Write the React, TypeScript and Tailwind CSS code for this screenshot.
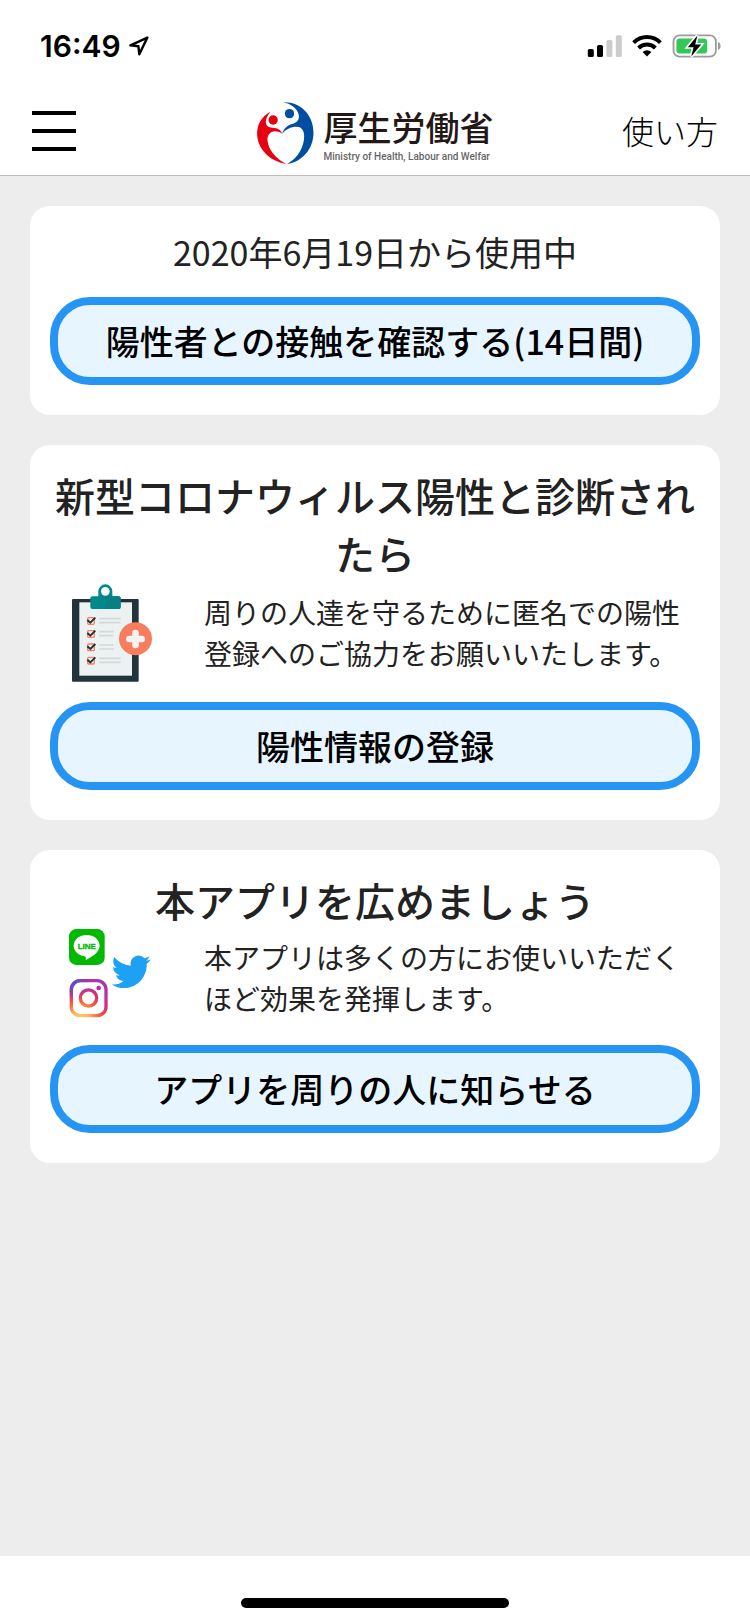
import type { ReactNode } from "react"

const jp = "font-['Noto_Sans_CJK_JP',sans-serif]"

function StatusBar() {
  return (
    <div className="flex h-[88px] items-center justify-between pr-[29px] pl-10">
      <div className="flex items-center gap-2 pt-1">
        <span className="font-['Inter',sans-serif] text-[30px] leading-[36px] font-semibold text-black">16:49</span>
        <svg width="20" height="20" viewBox="0 0 20 20" fill="none" stroke="#000" strokeWidth="2.4" strokeLinejoin="round">
          <path d="M18.4 1.6 1.4 9.4l8 .9.9 8z" />
        </svg>
      </div>
      <div className="flex items-center gap-[10px] pt-1">
        <svg width="35" height="24" viewBox="0 0 35 24">
          <rect x="0.8" y="15" width="6" height="8" rx="1.6" fill="#000" />
          <rect x="10" y="11" width="6" height="12" rx="1.6" fill="#000" />
          <rect x="19.4" y="6" width="6" height="17" rx="1.6" fill="#ccc" />
          <rect x="28.8" y="1.2" width="6" height="21.8" rx="1.6" fill="#ccc" />
        </svg>
        <svg width="30" height="24" viewBox="0 0 30 24" fill="none" stroke="#000" strokeWidth="4">
          <path d="M1.6 8.6a19 19 0 0 1 26.8 0" />
          <path d="M6.6 14a12 12 0 0 1 16.8 0" />
          <path d="M15 22.4 10.6 18a6.2 6.2 0 0 1 8.8 0z" fill="#000" stroke="none" />
        </svg>
        <svg width="49" height="24" viewBox="0 0 49 24">
          <rect x="1.5" y="1.3" width="42.4" height="21.4" rx="6" fill="none" stroke="#9b9b9b" strokeWidth="1.8" />
          <path d="M46 8v8c1.6-.6 2.6-2.2 2.6-4s-1-3.4-2.6-4z" fill="#9b9b9b" />
          <rect x="4.4" y="4.4" width="30.8" height="15.2" rx="3.4" fill="#34c759" />
          <path d="M25.4 1.6 15.8 13.2h5.8L19.2 22.4 29.2 10.6h-6z" fill="#000" stroke="#fff" strokeWidth="3.2" paintOrder="stroke" />
        </svg>
      </div>
    </div>
  )
}

function MinistryLogo() {
  return (
    <div className="flex items-end gap-[9px]">
      <svg width="58" height="64" viewBox="32 33 174 192">
        <circle cx="82" cy="90" r="14" fill="#e60012" />
        <path
          d="M74 65C46 79 32 106 34 136c2 38 34 78 88 86-34-16-56-46-57-72-1-15 9-25 22-26 10 0 17 3 22 7-3-11-13-17-29-18-13-1-20-6-20-18 0-10 5-19 14-30z"
          fill="#e60012"
        />
        <circle cx="131" cy="71" r="14" fill="#004ea2" />
        <path
          d="M112 37c52-2 91 38 91 91 0 48-33 87-79 94 32-18 51-50 51-84 0-18-9-28-23-28-17 0-33 8-43 21 4-15 16-25 30-29 18-6 24-16 18-33-6-16-22-27-45-32z"
          fill="#004ea2"
        />
      </svg>
      <div>
        <p className={`${jp} text-[34px] leading-[44px] font-medium whitespace-nowrap text-[#231815]`}>厚生労働省</p>
        <p className="font-['Roboto',sans-serif] text-[10px] leading-[16px] font-medium whitespace-nowrap text-[#666]">
          Ministry of Health, Labour and Welfar
        </p>
      </div>
    </div>
  )
}

function Header() {
  return (
    <header className="relative flex h-[88px] items-center justify-between border-b border-[#bcbcbc] px-8 pb-0.5">
      <button type="button" aria-label="メニュー" className="flex w-11 flex-col gap-[14px]">
        <span className="h-1 w-full bg-black" />
        <span className="h-1 w-full bg-black" />
        <span className="h-1 w-full bg-black" />
      </button>
      <div className="absolute bottom-[10px] left-1/2 -translate-x-1/2">
        <MinistryLogo />
      </div>
      <a href="#usage" className={`${jp} pb-0.5 text-[32px] leading-[46px] font-light text-black`}>
        使い方
      </a>
    </header>
  )
}

const checkRows = [
  { y: 149, end: 212 },
  { y: 188, end: 191 },
  { y: 228, end: 191 },
  { y: 268, end: 212 },
]

function ClipboardIcon() {
  return (
    <svg width="80" height="100" viewBox="66 33 240 300">
      <rect x="66" y="84" width="200" height="248" rx="3" fill="#22333b" />
      <rect x="88" y="94" width="158" height="220" fill="#ecf2f2" />
      <path d="M145 76V61a21 21 0 0 1 42 0v15h19a6 6 0 0 1 6 6v26a6 6 0 0 1-6 6h-79a6 6 0 0 1-6-6V82a6 6 0 0 1 6-6z" fill="#00888a" />
      <path d="M166 76h40a6 6 0 0 1 6 6v26a6 6 0 0 1-6 6h-40z" fill="#087f80" />
      <circle cx="166" cy="61" r="13" fill="#fff" />
      {checkRows.map(({ y, end }) => (
        <g key={y} fill="none">
          <rect x="113" y={y - 9} width="20" height="20" rx="3" stroke="#f9805f" strokeWidth="4" />
          <path d={`M112 ${y - 2}l9 8 15-15`} stroke="#22333b" strokeWidth="6" />
          <path d={`M147 ${y - 6}H${end}M147 ${y + 6}H${end}`} stroke="#d3dadb" strokeWidth="5" />
        </g>
      ))}
      <circle cx="256.5" cy="203" r="49.5" fill="#f87c5e" />
      <path d="M256.5 186v36M238 204h37" stroke="#f3f3f1" strokeWidth="20" strokeLinecap="round" />
    </svg>
  )
}

function SocialIcons() {
  return (
    <svg width="86" height="96" viewBox="57 39 258 288">
      <defs>
        <radialGradient id="insta" gradientUnits="userSpaceOnUse" cx="92" cy="312" r="132">
          <stop offset="0" stopColor="#ffd070" />
          <stop offset="0.2" stopColor="#fdb65c" />
          <stop offset="0.45" stopColor="#f5583f" />
          <stop offset="0.65" stopColor="#d82c7c" />
          <stop offset="1" stopColor="#a535b5" />
        </radialGradient>
        <radialGradient id="instaBlue" gradientUnits="userSpaceOnUse" cx="62" cy="192" r="64">
          <stop offset="0" stopColor="#4a56d2" />
          <stop offset="0.4" stopColor="#5a50ce" stopOpacity="0.8" />
          <stop offset="1" stopColor="#8a3ac8" stopOpacity="0" />
        </radialGradient>
      </defs>
      <rect x="57" y="39" width="107" height="108" rx="22" fill="#00b900" />
      <path d="M110 57c-22 0-39 14-39 32 0 16 14 29 33 32 4 1 4 4 3 11 14-7 42-22 42-43 0-18-17-32-39-32z" fill="#fff" />
      <text x="110.5" y="98" textAnchor="middle" fill="#00b900" stroke="#00b900" strokeWidth="1" className="font-['Liberation_Sans',sans-serif] text-[24px] font-bold">
        LINE
      </text>
      <path
        transform="translate(185 107.5) scale(4.88 5)"
        d="M23.953 4.57a10 10 0 0 1-2.825.775 4.958 4.958 0 0 0 2.163-2.723c-.951.555-2.005.959-3.127 1.184a4.92 4.92 0 0 0-8.384 4.482C7.69 8.095 4.067 6.13 1.64 3.162a4.822 4.822 0 0 0-.666 2.475c0 1.71.87 3.213 2.188 4.096a4.904 4.904 0 0 1-2.228-.616v.06a4.923 4.923 0 0 0 3.946 4.827 4.996 4.996 0 0 1-2.212.085 4.936 4.936 0 0 0 4.604 3.417 9.867 9.867 0 0 1-6.102 2.105c-.39 0-.779-.023-1.17-.067a13.995 13.995 0 0 0 7.557 2.209c9.053 0 13.998-7.496 13.998-13.985 0-.21 0-.42-.015-.63A9.935 9.935 0 0 0 24 4.59z"
        fill="#1da1f2"
      />
      {["url(#insta)", "url(#instaBlue)"].map((paint) => (
        <g key={paint} fill="none" stroke={paint} strokeWidth="10">
          <rect x="64" y="194" width="104" height="105" rx="27" />
          <circle cx="115.5" cy="246" r="24.5" />
        </g>
      ))}
      <circle cx="146" cy="216" r="7" fill="#b9309a" />
    </svg>
  )
}

function Card({ children }: { children: ReactNode }) {
  return <section className="flex flex-col rounded-[20px] bg-white px-5 pt-[21px] pb-[30px]">{children}</section>
}

function CardTitle({ children }: { children: ReactNode }) {
  return <h2 className="text-center text-[40px] leading-[58px] font-medium">{children}</h2>
}

function CardBody({ icon, children }: { icon: ReactNode; children: ReactNode }) {
  return (
    <div className="flex gap-[30px]">
      <div className="flex w-[124px] shrink-0 items-start justify-center">{icon}</div>
      <p className="self-center pt-0.5 text-[28px] leading-[41px]">{children}</p>
    </div>
  )
}

function ActionButton({ children }: { children: ReactNode }) {
  return (
    <button
      type="button"
      className="mt-5 h-[88px] w-full rounded-[40px] border-8 border-[#2594f3] bg-[#e6f5ff] text-[34px] leading-[50px] font-medium text-black"
    >
      {children}
    </button>
  )
}

export default function App() {
  return (
    <div className="flex min-h-screen flex-col bg-white">
      <StatusBar />
      <Header />
      <main className={`${jp} flex flex-1 flex-col gap-[30px] bg-[#ededed] p-[30px] text-[#222]`} lang="ja">
        <Card>
          <p className="text-center text-[34px] leading-[50px]">2020年6月19日から使用中</p>
          <ActionButton>陽性者との接触を確認する(14日間)</ActionButton>
        </Card>
        <Card>
          <CardTitle>新型コロナウィルス陽性と診断されたら</CardTitle>
          <CardBody icon={<ClipboardIcon />}>周りの人達を守るために匿名での陽性登録へのご協力をお願いいたします。</CardBody>
          <ActionButton>陽性情報の登録</ActionButton>
        </Card>
        <Card>
          <CardTitle>本アプリを広めましょう</CardTitle>
          <CardBody icon={<SocialIcons />}>本アプリは多くの方にお使いいただくほど効果を発揮します。</CardBody>
          <ActionButton>アプリを周りの人に知らせる</ActionButton>
        </Card>
      </main>
      <div className="flex h-[68px] items-end justify-center pb-4">
        <div className="h-[10px] w-[268px] rounded-full bg-black" />
      </div>
    </div>
  )
}
